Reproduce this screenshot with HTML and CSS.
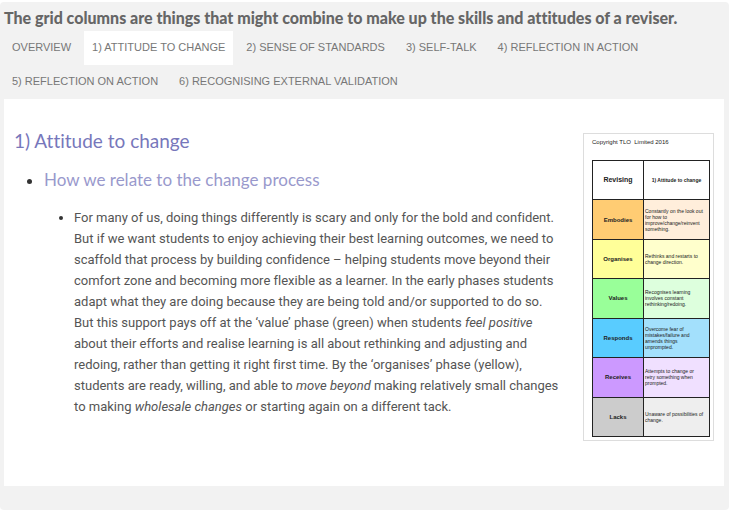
FILE: index.html
```html
<!DOCTYPE html>
<html lang="en">
<head>
<meta charset="utf-8">
<title>Revising</title>
<link rel="stylesheet" href="styles.css">
</head>
<body>

<section class="tabs">
	<h3 class="tabs-title">The grid columns are things that might combine to make up the skills and attitudes of a reviser.</h3>

	<nav class="tabs-nav">
		<a href="#overview">OVERVIEW</a>
		<a href="#attitude" class="active">1) ATTITUDE TO CHANGE</a>
		<a href="#standards">2) SENSE OF STANDARDS</a>
		<a href="#self-talk">3) SELF-TALK</a>
		<a href="#in-action">4) REFLECTION IN ACTION</a>
		<a href="#on-action">5) REFLECTION ON ACTION</a>
		<a href="#validation">6) RECOGNISING EXTERNAL VALIDATION</a>
	</nav>

	<div class="panel" id="attitude">
		<div class="copy">
			<h2>1) Attitude to change</h2>
			<ul class="outer">
				<li>
					<h4>How we relate to the change process</h4>
					<ul class="inner">
						<li>For many of us, doing things differently is scary and only for the bold and confident.<br>
						But if we want students to enjoy achieving their best learning outcomes, we need to<br>
						scaffold that process by building confidence – helping students move beyond their<br>
						comfort zone and becoming more flexible as a learner. In the early phases students<br>
						adapt what they are doing because they are being told and/or supported to do so.<br>
						But this support pays off at the ‘value’ phase (green) when students <em>feel positive</em><br>
						about their efforts and realise learning is all about rethinking and adjusting and<br>
						redoing, rather than getting it right first time. By the ‘organises’ phase (yellow),<br>
						students are ready, willing, and able to <em>move beyond</em> making relatively small changes<br>
						to making <em>wholesale changes</em> or starting again on a different tack.</li>
					</ul>
				</li>
			</ul>
		</div>

		<figure class="grid">
			<figcaption>Copyright TLO&nbsp; Limited 2016</figcaption>
			<table>
				<tr class="head"><th>Revising</th><th>1) Attitude to change</th></tr>
				<tr class="embodies"><th>Embodies</th><td>Constantly on the look out<br>for how to<br>improve/change/reinvent<br>something.</td></tr>
				<tr class="organises"><th>Organises</th><td>Rethinks and restarts to<br>change direction.</td></tr>
				<tr class="values"><th>Values</th><td>Recognises learning<br>involves constant<br>rethinking/redoing.</td></tr>
				<tr class="responds"><th>Responds</th><td>Overcome fear of<br>mistakes/failure and<br>amends things<br>unprompted.</td></tr>
				<tr class="receives"><th>Receives</th><td>Attempts to change or<br>retry something when<br>prompted.</td></tr>
				<tr class="lacks"><th>Lacks</th><td>Unaware of possibilities of<br>change.</td></tr>
			</table>
		</figure>
	</div>
</section>

</body>
</html>
```
FILE: styles.css
```css
* {
	box-sizing: border-box;
}

body {
	margin: 2px 2px 0 0;
	background: #fff;
	color: #555;
	font-family: Lato, "Noto Sans", sans-serif;
	font-variant-ligatures: no-common-ligatures;
}

.tabs {
	padding: 4px 5px 24px 4px;
	background: #f2f2f2;
	border-radius: 4px;
}

.tabs-title {
	margin: 0 0 1px;
	font-size: 16px;
	line-height: 24px;
	font-weight: 900;
	color: #666;
}

.tabs-nav {
	display: flex;
	flex-wrap: wrap;
	column-gap: 5px;
	padding-right: 60px;
}
.tabs-nav a {
	padding: 0 8px 2px;
	font: 11px/32px "Liberation Sans", Arial, sans-serif;
	color: #777;
	text-decoration: none;
}
.tabs-nav a.active {
	background: #fff;
}

.panel {
	display: flex;
	justify-content: space-between;
	align-items: flex-start;
	padding: 34px 10px 45px;
	background: #fff;
}

.copy {
	white-space: nowrap;
}
.copy h2 {
	margin: -6px 0 12px;
	font-size: 19px;
	line-height: 28px;
	font-weight: 400;
	color: #7777bb;
}
.copy h4 {
	margin: 0 0 14px;
	font-size: 17px;
	line-height: 26px;
	font-weight: 400;
	color: #9999cc;
}
.copy ul {
	margin: 0;
	padding: 0 0 0 30px;
}
.copy li::marker {
	color: #333;
}
.copy .inner {
	list-style: disc;
	font-family: Roboto, sans-serif;
	font-size: 13px;
	line-height: 21px;
}

.grid {
	flex: none;
	width: 131px;
	margin: 0;
	padding: 4px 3px 3px 8px;
	border: 1px solid #ddd;
	color: #222;
	font: 6px/8px "Liberation Sans", Arial, sans-serif;
}
.grid figcaption {
	margin-bottom: 14px;
}
.grid table {
	width: 118px;
	height: 277px;
	border-collapse: collapse;
	table-layout: fixed;
}
.grid th,
.grid td {
	height: 39px;
	padding: 0 1px;
	border: 1px solid #222;
	text-align: left;
	white-space: nowrap;
}
.grid td {
	font-size: 5px;
	line-height: 6px;
}
.grid th {
	text-align: center;
	font-size: 6px;
}
.grid th:first-child {
	width: 51px;
}
.grid .head th:last-child {
	font-size: 5px;
}
.grid .head th:first-child {
	font-size: 7px;
}

.embodies th { background: #ffcc73; }
.embodies td { background: #ffeedb; }
.organises th { background: #ffff99; }
.organises td { background: #ffffcc; }
.values th { background: #99ff99; }
.values td { background: #ddffdd; }
.responds th { background: #59ccff; }
.responds td { background: #a3e0fc; }
.receives th { background: #cc99ff; }
.receives td { background: #f0e0ff; }
.lacks th { background: #cccccc; }
.lacks td { background: #eeeeee; }
```
